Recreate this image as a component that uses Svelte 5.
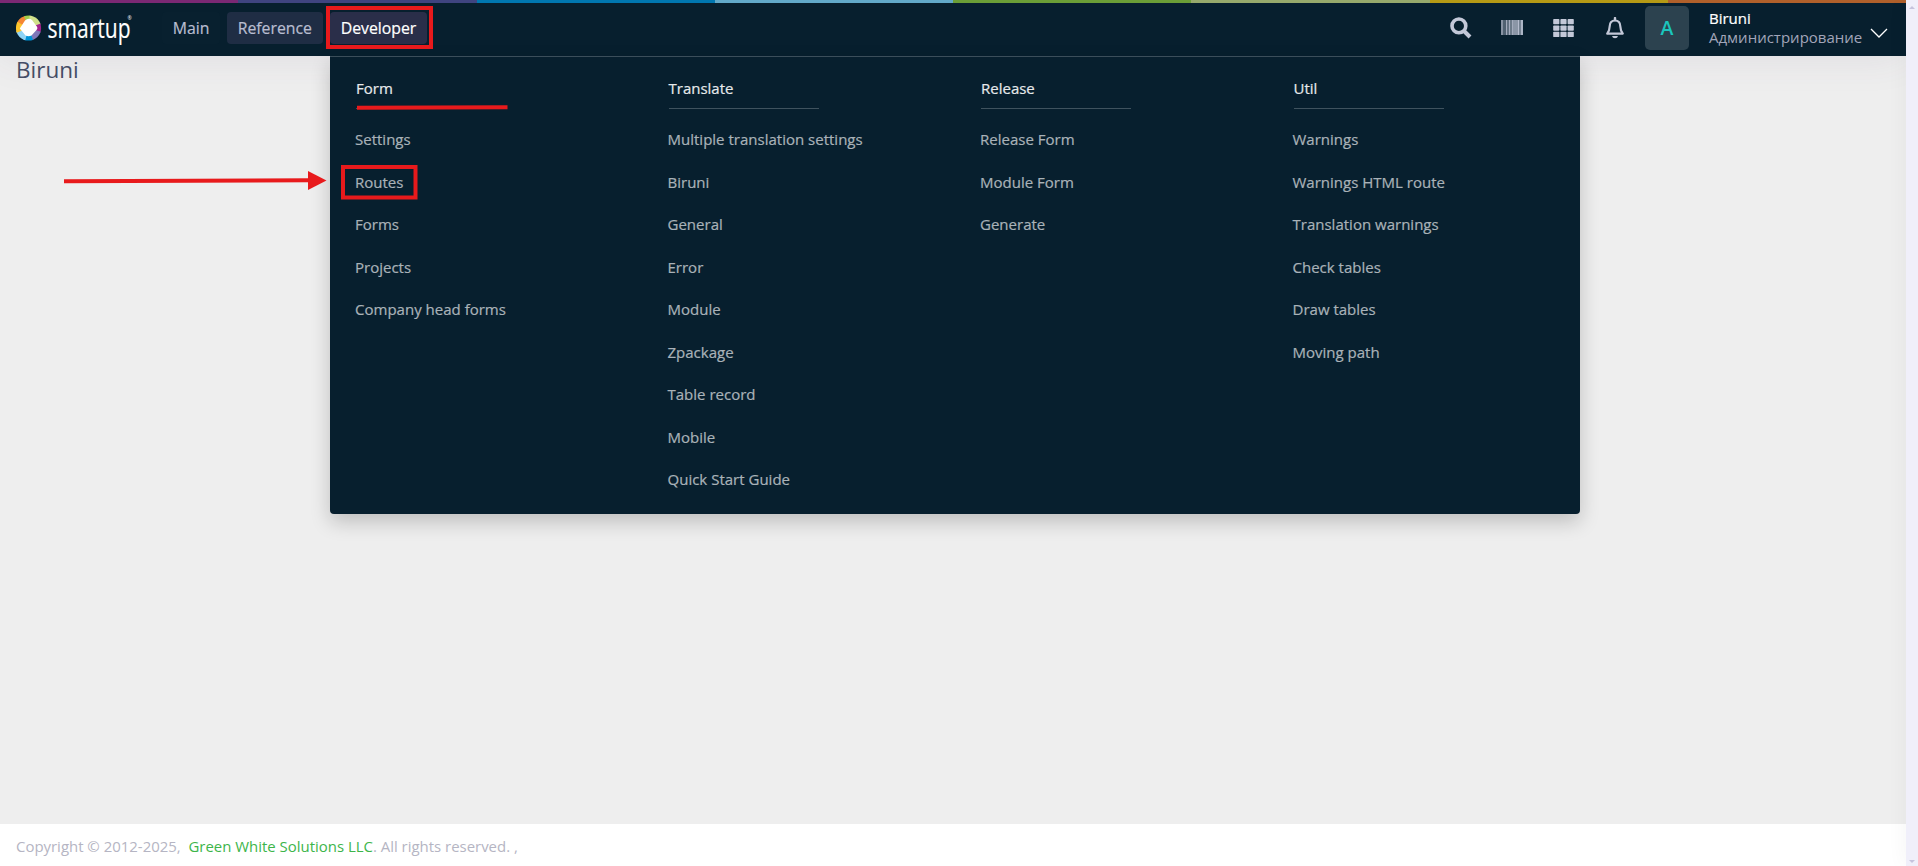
<script>
  const stripes = ['#7b2874', '#3f4480', '#0077b0', '#62a9c9', '#6b9e37', '#96a96c', '#b59a15', '#b0602b'];
  const nav = [
    { label: 'Main', kind: 'plain' },
    { label: 'Reference', kind: 'hover' },
    { label: 'Developer', kind: 'active' }
  ];
  const columns = [
    { title: 'Form', items: ['Settings', 'Routes', 'Forms', 'Projects', 'Company head forms'] },
    { title: 'Translate', items: ['Multiple translation settings', 'Biruni', 'General', 'Error', 'Module', 'Zpackage', 'Table record', 'Mobile', 'Quick Start Guide'] },
    { title: 'Release', items: ['Release Form', 'Module Form', 'Generate'] },
    { title: 'Util', items: ['Warnings', 'Warnings HTML route', 'Translation warnings', 'Check tables', 'Draw tables', 'Moving path'] }
  ];
  const bars = [
    [0, 2, 0.7], [2, 3, 0.4], [5, 1, 0.85], [6, 2, 0.5], [8, 1, 0.85], [9, 2, 0.55], [11, 1, 0.85],
    [12, 5, 0.72], [17, 1, 0.95], [18, 2, 0.6], [20, 2, 0.9]
  ];
</script>

<div class="screen">
  <div class="page">
    <header>
      <div class="stripes">
        {#each stripes as color}<i style="background:{color}"></i>{/each}
      </div>
      <div class="bar">
        <svg class="logo" width="120" height="36" viewBox="0 0 120 36">
          <clipPath id="disc"><circle cx="12.5" cy="17" r="12.6" /></clipPath>
          <g clip-path="url(#disc)">
            <path d="M12.5 17L8 0H0V11z" fill="#f58634" />
            <path d="M12.5 17L6 0H15z" fill="#a3cd4d" />
            <path d="M12.5 17L14 0H26V13z" fill="#d0e18b" />
            <path d="M12.5 17L26 12V23z" fill="#a3238e" />
            <path d="M12.5 17L26 21V34H17z" fill="#7e78b8" />
            <path d="M12.5 17L19 34H5z" fill="#0093d6" />
            <path d="M12.5 17L8 34H0V20z" fill="#8fd4f5" />
            <path d="M12.5 17L0 22V10z" fill="#fdc52c" />
          </g>
          <path d="M3.800 17.500L9 9.500Q12.500 6.500 16 9L21.200 16Q21.800 18 20.500 19L15.500 24.500Q12.500 26 9.500 24.500z" fill="#fff" />
          <text><tspan class="word" x="31.500" y="27" textLength="83" lengthAdjust="spacingAndGlyphs">smartup</tspan><tspan x="111.500" y="9" class="reg">®</tspan></text>
        </svg>
        <nav>
          {#each nav as n}<a class={n.kind}>{n.label}</a>{/each}
        </nav>
        <div class="tools">
          <svg class="t" width="22" height="22" viewBox="0 0 22 22"><circle cx="8.900" cy="8.900" r="6.900" fill="none" stroke="#c3c8d8" stroke-width="3.600" /><path d="M14 14L20 20" stroke="#c3c8d8" stroke-width="4" /></svg>
          <svg class="t" width="22" height="15" viewBox="0 0 22 15">{#each bars as [x, w, o]}<rect {x} y="0" width={w} height="15" fill="#bfc5d6" opacity={o} />{/each}</svg>
          <svg class="t" width="22" height="18" viewBox="0 0 22 18">
            {#each [0, 6.400, 12.800] as y}{#each [0.200, 7.400, 14.600] as x}<rect {x} {y} width="6.200" height="5.300" rx="0.800" fill="#c3c8d8" />{/each}{/each}
          </svg>
          <svg class="t bell" width="20" height="22" viewBox="0 0 20 22"><path d="M10 3.500C6.200 3.500 4.800 6.300 4.700 9.200C4.600 12.500 3.800 14.600 2.200 16.600H17.800C16.200 14.600 15.400 12.500 15.300 9.200C15.200 6.300 13.800 3.500 10 3.500Z" fill="none" stroke="#c3c8d8" stroke-width="2.200" stroke-linejoin="round" /><path d="M10 1V3" stroke="#c3c8d8" stroke-width="2.400" stroke-linecap="round" /><path d="M7 19H13Q12.500 21.300 10 21.300Q7.500 21.300 7 19Z" fill="#c3c8d8" /></svg>
          <div class="avatar">A</div>
          <div class="user"><b>Biruni</b><span>Администрирование</span></div>
          <svg class="chev" width="18" height="10" viewBox="0 0 18 10"><path d="M1 1L9 9L17 1" fill="none" stroke="#fff" stroke-width="1.300" /></svg>
        </div>
      </div>
    </header>
    <main><h1>Biruni</h1></main>
    <footer>Copyright © 2012-2025,&nbsp; <a>Green White Solutions LLC</a>. All rights reserved. ,</footer>

    <section class="menu">
      {#each columns as c}
        <div class="col">
          <h2>{c.title}</h2>
          <ul>{#each c.items as item}<li><a>{item}</a></li>{/each}</ul>
        </div>
      {/each}
    </section>
    <svg class="marks" width="560" height="220" viewBox="0 0 560 220">
      <g fill="none" stroke="#e81a1c">
        <rect x="328" y="8" width="103" height="39" stroke-width="4" />
        <rect x="343" y="167" width="72.500" height="30.500" stroke-width="4" />
        <path d="M357 107.700L507.500 107.300" stroke-width="4" />
        <path d="M64 181.300L310 180.300" stroke-width="4" />
      </g>
      <path d="M308 171L326.500 180.500L308 190z" fill="#e81a1c" />
    </svg>
  </div>
  <aside><i class="up"></i><i class="down"></i></aside>
</div>

<style>
  :global(body) { margin: 0; background: #eeeeee; }
  .screen { display: flex; width: 1918px; height: 866px; overflow: hidden; font-family: 'Open Sans', sans-serif; }
  .page { position: relative; width: 1906px; display: flex; flex-direction: column; background: #eeeeee; }
  header { height: 56px; background: #071f2e; box-shadow: 0 0 40px rgba(82, 63, 105, 0.1); position: relative; z-index: 1; }
  .stripes { display: flex; height: 3px; }
  .stripes i { flex: 1; }
  .bar { display: flex; height: 53px; }
  .logo { margin: 8px 0 0 16px; overflow: visible; }
  .logo text { fill: #fff; font-family: 'Open Sans', sans-serif; }
  .word { font-size: 27px; stroke: #fff; stroke-width: 0.15px; }
  .reg { font-size: 5px; }
  nav { display: flex; gap: 7px; margin: 9px 0 0 26px; }
  nav a { height: 32px; line-height: 32px; padding: 0 10.700px; border-radius: 4px; font-size: 15.800px; color: #b9bdd0; box-sizing: border-box; -webkit-text-stroke: 0.2px; white-space: nowrap; }
  nav .plain { background: #08202f; width: 58px; }
  nav .hover { background: #1f2d44; width: 96px; }
  nav .active { background: #2a2e49; color: #fff; width: 97px; }
  .tools { display: flex; margin-left: auto; margin-right: 18px; }
  .tools .t { margin-right: 30px; margin-top: 16px; }
  .tools .t:nth-child(1) { margin-top: 14px; margin-right: 29px; }
  .tools .t:nth-child(2) { margin-top: 17px; }
  .tools .bell { margin-top: 14px; margin-right: 20px; }
  .avatar { width: 44px; height: 44px; margin-top: 3px; border-radius: 5px; background: #2c424f; color: #1bc5bd; font-weight: 600; font-size: 19.500px; line-height: 44px; text-align: center; }
  .user { margin: 6px 0 0 20px; width: 161px; display: flex; flex-direction: column; font-size: 15px; line-height: 19px; white-space: nowrap; }
  .user b { font-weight: 500; color: #fff; -webkit-text-stroke: 0.2px; }
  .user span { color: #a2a5b9; }
  .chev { margin-top: 25px; }
  main { flex: 1; }
  h1 { margin: -1px 0 0 16px; font-size: 22.500px; line-height: 30px; font-weight: 400; color: #464e66; }
  footer { height: 42px; box-sizing: border-box; background: #fff; padding-left: 16px; line-height: 45px; font-size: 14.950px; color: #b5b5c3; white-space: nowrap; }
  footer a { color: #3db54a; }
  .menu { position: absolute; z-index: 2; left: 330px; top: 56px; width: 1250px; height: 458px; box-sizing: border-box; border-top: 1px solid #3b4e5a; background: #071f2e; display: grid; grid-template-columns: repeat(4, 1fr); border-radius: 0 0 4px 4px; box-shadow: 0 8px 20px rgba(0, 0, 0, 0.2); }
  .col { padding: 20px 0 0 25px; }
  h2 { margin: 0 0 0 1.400px; width: 150px; height: 32px; box-sizing: border-box; border-bottom: 1px solid #3f525e; font-size: 15px; line-height: 22px; font-weight: 500; color: #e6e9eb; -webkit-text-stroke: 0.2px; text-indent: -0.400px; }
  ul { list-style: none; margin: 9px 0 0; padding: 0; }
  li { height: 42.500px; line-height: 42.500px; font-size: 15.020px; font-weight: 500; color: #a9b2b8; white-space: nowrap; -webkit-text-stroke: 0.2px; }
  .marks { position: absolute; z-index: 3; left: 0; top: 0; }
  aside { width: 12px; background: #f0effa; display: flex; flex-direction: column; justify-content: space-between; align-items: center; box-sizing: border-box; padding: 6px 0 3px; position: relative; z-index: 4; box-shadow: 0 0 20px rgba(0, 0, 0, 0.06); }
  aside i { border: 3px solid transparent; width: 0; height: 0; }
  .up { border-top: 0; border-bottom-color: #c6c3dd; }
  .down { border-bottom: 0; border-top-color: #c6c3dd; }
</style>
